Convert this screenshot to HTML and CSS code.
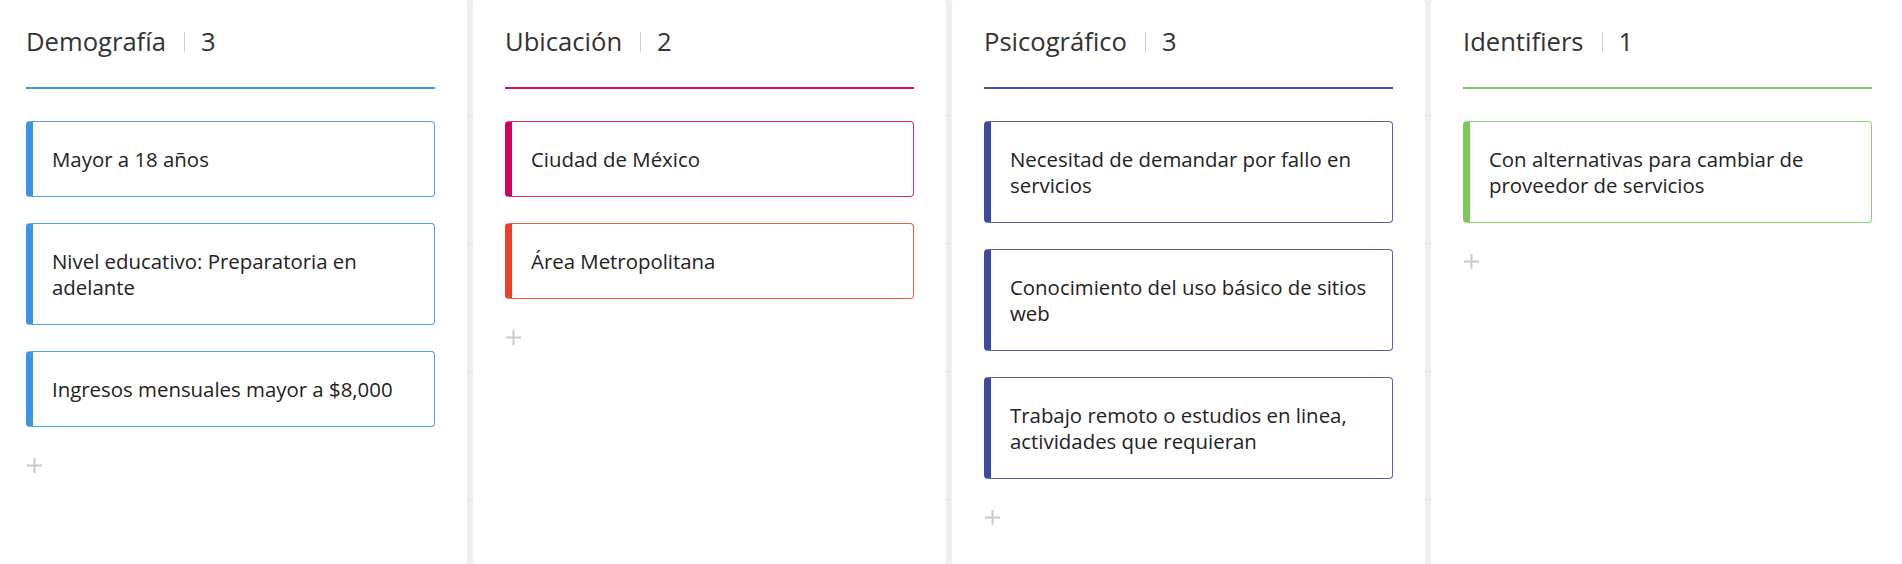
FILE: index.html
```html
<!DOCTYPE html>
<html lang="es">

<head>
    <meta charset="UTF-8">
    <meta name="viewport" content="width=device-width, initial-scale=1.0">
    <title>Segmentos</title>
    <link rel="stylesheet" href="styles.css">
</head>

<body>
    <main class="board">
        <section class="column col-blue">
            <header class="column-header">
                <h2>Demografía</h2>
                <span class="divider"></span>
                <span class="count">3</span>
            </header>
            <div class="cards">
                <div class="card card-blue">Mayor a 18 años</div>
                <div class="card card-blue">Nivel educativo: Preparatoria en adelante</div>
                <div class="card card-blue">Ingresos mensuales mayor a $8,000</div>
            </div>
            <button class="add-btn" title="Agregar">
                <svg width="15" height="15" viewBox="0 0 15 15"><path d="M7.5 0v15M0 7.5h15" /></svg>
            </button>
        </section>

        <section class="column col-crimson">
            <header class="column-header">
                <h2>Ubicación</h2>
                <span class="divider"></span>
                <span class="count">2</span>
            </header>
            <div class="cards">
                <div class="card card-crimson">Ciudad de México</div>
                <div class="card card-orange">Área Metropolitana</div>
            </div>
            <button class="add-btn" title="Agregar">
                <svg width="15" height="15" viewBox="0 0 15 15"><path d="M7.5 0v15M0 7.5h15" /></svg>
            </button>
        </section>

        <section class="column col-indigo">
            <header class="column-header">
                <h2>Psicográfico</h2>
                <span class="divider"></span>
                <span class="count">3</span>
            </header>
            <div class="cards">
                <div class="card card-indigo">Necesitad de demandar por fallo en servicios</div>
                <div class="card card-indigo">Conocimiento del uso básico de sitios web</div>
                <div class="card card-indigo">Trabajo remoto o estudios en linea, actividades que requieran</div>
            </div>
            <button class="add-btn" title="Agregar">
                <svg width="15" height="15" viewBox="0 0 15 15"><path d="M7.5 0v15M0 7.5h15" /></svg>
            </button>
        </section>

        <section class="column col-green">
            <header class="column-header">
                <h2>Identifiers</h2>
                <span class="divider"></span>
                <span class="count">1</span>
            </header>
            <div class="cards">
                <div class="card card-green">Con alternativas para cambiar de proveedor de servicios</div>
            </div>
            <button class="add-btn" title="Agregar">
                <svg width="15" height="15" viewBox="0 0 15 15"><path d="M7.5 0v15M0 7.5h15" /></svg>
            </button>
        </section>
    </main>
</body>

</html>
```

FILE: styles.css
```css
body {
    font-family: "Open Sans", "DejaVu Sans", sans-serif;
    margin: 0;
    padding: 0;
    background-color: #fff;
    color: #222;
    overflow: hidden;
}

.board {
    display: flex;
    gap: 6px;
    height: 564px;
    margin-left: -6px;
    background-color: #efefef;
    background-image: repeating-linear-gradient(to bottom,
            transparent 0, transparent 115px,
            #e4e4e4 115px, #e4e4e4 116px,
            transparent 116px, transparent 128px);
}

.column {
    flex: 0 0 473px;
    box-sizing: border-box;
    padding: 0 32px;
    background-color: #fff;
    border-radius: 3px;
}

.column-header {
    display: flex;
    align-items: center;
    padding: 26px 0 29px;
    border-bottom: 2px solid #3d97e5;
    line-height: 32px;
    font-size: 25.6px;
    color: #333;
}

.column-header h2 {
    margin: 0;
    font-size: 25.6px;
    font-weight: 400;
}

.divider {
    width: 1px;
    height: 20px;
    margin: 0 16px 0 18px;
    background-color: #d0d0d0;
}

.col-blue .column-header { border-bottom-color: #3d97e5; }
.col-crimson .column-header { border-bottom-color: #d80b5c; }
.col-indigo .column-header { border-bottom-color: #4450a8; }
.col-green .column-header { border-bottom-color: #7ccb5e; }

.cards {
    display: flex;
    flex-direction: column;
    gap: 26px;
    margin-top: 32px;
}

.card {
    padding: 24px 24px 24px 19px;
    border: 1px solid;
    border-left-width: 7px;
    border-radius: 4px;
    font-size: 20.4px;
    line-height: 26px;
    color: #222;
}

.card-blue {
    border-color: #4a9fe8;
    border-left-color: #3b95e2;
}

.card-crimson {
    border-color: #d8296e;
    border-left-color: #d3005a;
}

.card-orange {
    border-color: #f05a43;
    border-left-color: #ec3f2c;
}

.card-indigo {
    border-color: #5460b3;
    border-left-color: #3e49a0;
}

.card-green {
    border-color: #8cd272;
    border-left-color: #7bc95b;
}

.add-btn {
    display: block;
    margin: 31px 0 0 1px;
    padding: 0;
    border: none;
    background: none;
    cursor: pointer;
    line-height: 0;
}

.add-btn svg path {
    stroke: #c9c9c9;
    stroke-width: 2;
}
```
